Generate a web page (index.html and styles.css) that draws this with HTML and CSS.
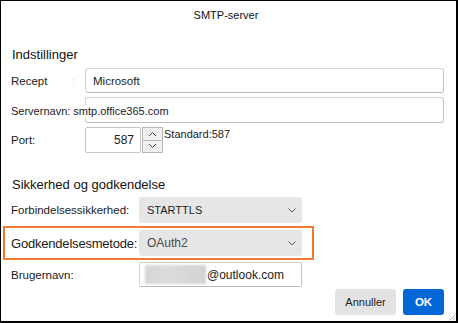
FILE: index.html
```html
<!DOCTYPE html>
<html lang="da">
<head>
  <meta charset="UTF-8">
  <meta name="viewport" content="width=device-width, initial-scale=1.0">
  <title>SMTP-server</title>
  <link rel="stylesheet" href="styles.css">
</head>
<body>

<div class="dialog">
  <div class="title">SMTP-server</div>

  <div class="form">
    <h2 class="section">Indstillinger</h2>

    <div class="row row-wide first">
      <label class="lbl lbl-recept">Recept <span class="faint">:</span></label>
      <div class="field">Microsoft</div>
    </div>

    <div class="row row-wide overlap">
      <div class="field"></div>
      <span class="lbl-over">Servernavn: smtp.office365.com</span>
    </div>

    <div class="row row-wide port-row">
      <label class="lbl">Port:</label>
      <div class="port">
        <div class="spin-field">587</div>
        <div class="spin-btns">
          <span class="spin-btn">
            <svg width="9" height="6" viewBox="0 0 9 6"><path d="M1 5 L4.5 1.5 L8 5" fill="none" stroke="#444" stroke-width="1"/></svg>
          </span>
          <span class="spin-btn">
            <svg width="9" height="6" viewBox="0 0 9 6"><path d="M1 1 L4.5 4.5 L8 1" fill="none" stroke="#444" stroke-width="1"/></svg>
          </span>
        </div>
        <span class="std">Standard:587</span>
      </div>
    </div>

    <h2 class="section section-sec">Sikkerhed og godkendelse</h2>

    <div class="row row-narrow sec-row">
      <label class="lbl">Forbindelsessikkerhed:</label>
      <div class="select">
        <span>STARTTLS</span>
        <svg width="8" height="5" viewBox="0 0 8 5"><path d="M0.5 0.5 L4 4 L7.5 0.5" fill="none" stroke="#555" stroke-width="1"/></svg>
      </div>
    </div>

    <div class="highlight">
      <div class="row row-narrow">
        <label class="lbl lbl-big">Godkendelsesmetode:</label>
        <div class="select select-muted">
          <span>OAuth2</span>
          <svg width="8" height="5" viewBox="0 0 8 5"><path d="M0.5 0.5 L4 4 L7.5 0.5" fill="none" stroke="#555" stroke-width="1"/></svg>
        </div>
      </div>
    </div>

    <div class="row row-narrow user-row">
      <label class="lbl">Brugernavn:</label>
      <div class="field user-field">
        <span class="blur"></span>
        <span class="domain">@outlook.com</span>
      </div>
    </div>

    <div class="actions">
      <button class="btn btn-cancel">Annuller</button>
      <button class="btn btn-ok">OK</button>
    </div>
  </div>

  <svg class="grip" width="7" height="7" viewBox="0 0 7 7">
    <path d="M6.5 0.5 L0.5 6.5 M6.5 3.5 L3.5 6.5" stroke="#b5b5b5" stroke-width="1"/>
  </svg>
</div>

</body>
</html>
```

FILE: styles.css
```css
* {
  box-sizing: border-box;
  margin: 0;
  padding: 0;
}

html, body {
  width: 458px;
  height: 323px;
  overflow: hidden;
  background: #fff;
  font-family: "Liberation Sans", Arial, sans-serif;
  color: #1b1b1b;
}

.dialog {
  width: 458px;
  height: 323px;
  border-style: solid;
  border-color: #000;
  border-width: 1px 2px 2px 1px;
  background: #fff;
  display: flex;
  flex-direction: column;
  position: relative;
}

.title {
  height: 28px;
  line-height: 28px;
  text-align: center;
  font-size: 11px;
  padding-right: 5px;
  color: #111;
}

.form {
  padding: 0 12px 0 10px;
  display: flex;
  flex-direction: column;
}

.section {
  font-size: 13px;
  font-weight: normal;
  line-height: 16px;
  margin-top: 18px;
  margin-left: 1px;
  color: #111;
}

.section-sec {
  margin-top: 24px;
}

.row {
  display: grid;
  align-items: center;
  margin-top: 4px;
}

.row-wide {
  grid-template-columns: 74px 1fr;
}

.row-narrow {
  grid-template-columns: 128px 163px;
}

.first {
  margin-top: 5px;
  height: 25px;
}

.lbl {
  font-size: 11.5px;
  color: #1b1b1b;
  white-space: nowrap;
}

.lbl-recept {
  display: flex;
  justify-content: space-between;
  padding-right: 10px;
}

.faint {
  color: #e2e2e2;
}

.lbl-big {
  font-size: 13px;
  letter-spacing: -0.2px;
}

.field {
  height: 100%;
  min-height: 25px;
  border: 1px solid #d2d2d2;
  border-right-color: #c2c2c2;
  border-bottom-color: #bcbcbc;
  border-radius: 3px;
  background: #fff;
  font-size: 11.5px;
  padding-left: 7px;
  display: flex;
  align-items: center;
}

.overlap {
  height: 26px;
}

.overlap .field {
  grid-column: 2;
  grid-row: 1;
  height: 26px;
}

.lbl-over {
  grid-column: 1 / -1;
  grid-row: 1;
  z-index: 1;
  font-size: 11px;
  line-height: 12px;
  margin-top: 1px;
  background: #fff;
  justify-self: start;
  color: #1b1b1b;
}

.port-row {
  height: 26px;
}

.port {
  display: flex;
  align-items: stretch;
  height: 26px;
}

.spin-field {
  width: 56px;
  border: 1px solid #c6c6c6;
  border-radius: 2px;
  font-size: 12px;
  text-align: right;
  padding-right: 6px;
  line-height: 24px;
  color: #222;
}

.spin-btns {
  width: 21px;
  margin-left: 1px;
  display: flex;
  flex-direction: column;
}

.spin-btn {
  flex: 1;
  border: 1px solid #b8b8b8;
  background: #f1f1f1;
  display: flex;
  align-items: center;
  justify-content: center;
}

.spin-btn + .spin-btn {
  border-top: none;
}

.std {
  font-size: 11px;
  margin-left: 1px;
  line-height: 14px;
  color: #1b1b1b;
}

.sec-row {
  height: 26px;
}

.select {
  height: 26px;
  background: #e6e6e6;
  border-radius: 3px;
  padding: 0 6px 0 8px;
  display: flex;
  align-items: center;
  justify-content: space-between;
  font-size: 11px;
  color: #1e1e1e;
}

.select-muted {
  font-size: 12px;
  color: #4a4a4a;
}

.highlight {
  margin-top: 3px;
  margin-left: -8px;
  align-self: flex-start;
  border: 2px solid #f27a30;
  padding: 2px 10px 2px 6px;
}

.highlight .row {
  margin-top: 0;
}

.user-row {
  margin-top: 2px;
  height: 25px;
}

.user-field {
  padding-left: 5px;
  border-radius: 2px;
}

.blur {
  width: 61px;
  height: 19px;
  background: linear-gradient(90deg, #d6d6d6, #dcdcdc 40%, #d2d2d2);
  filter: blur(1px);
}

.domain {
  margin-left: 1px;
  font-size: 12px;
  color: #222;
}

.actions {
  margin-top: 2px;
  display: flex;
  justify-content: flex-end;
  gap: 7px;
}

.btn {
  height: 26px;
  border: none;
  border-radius: 3px;
  font-family: "Liberation Sans", Arial, sans-serif;
  cursor: pointer;
}

.btn-cancel {
  width: 61px;
  background: #e3e3e3;
  font-size: 11px;
  color: #1b1b1b;
}

.btn-ok {
  width: 41px;
  background: #0366d6;
  color: #fff;
  font-size: 11.5px;
  font-weight: bold;
}

.grip {
  position: absolute;
  right: 0;
  bottom: 0;
}
```
